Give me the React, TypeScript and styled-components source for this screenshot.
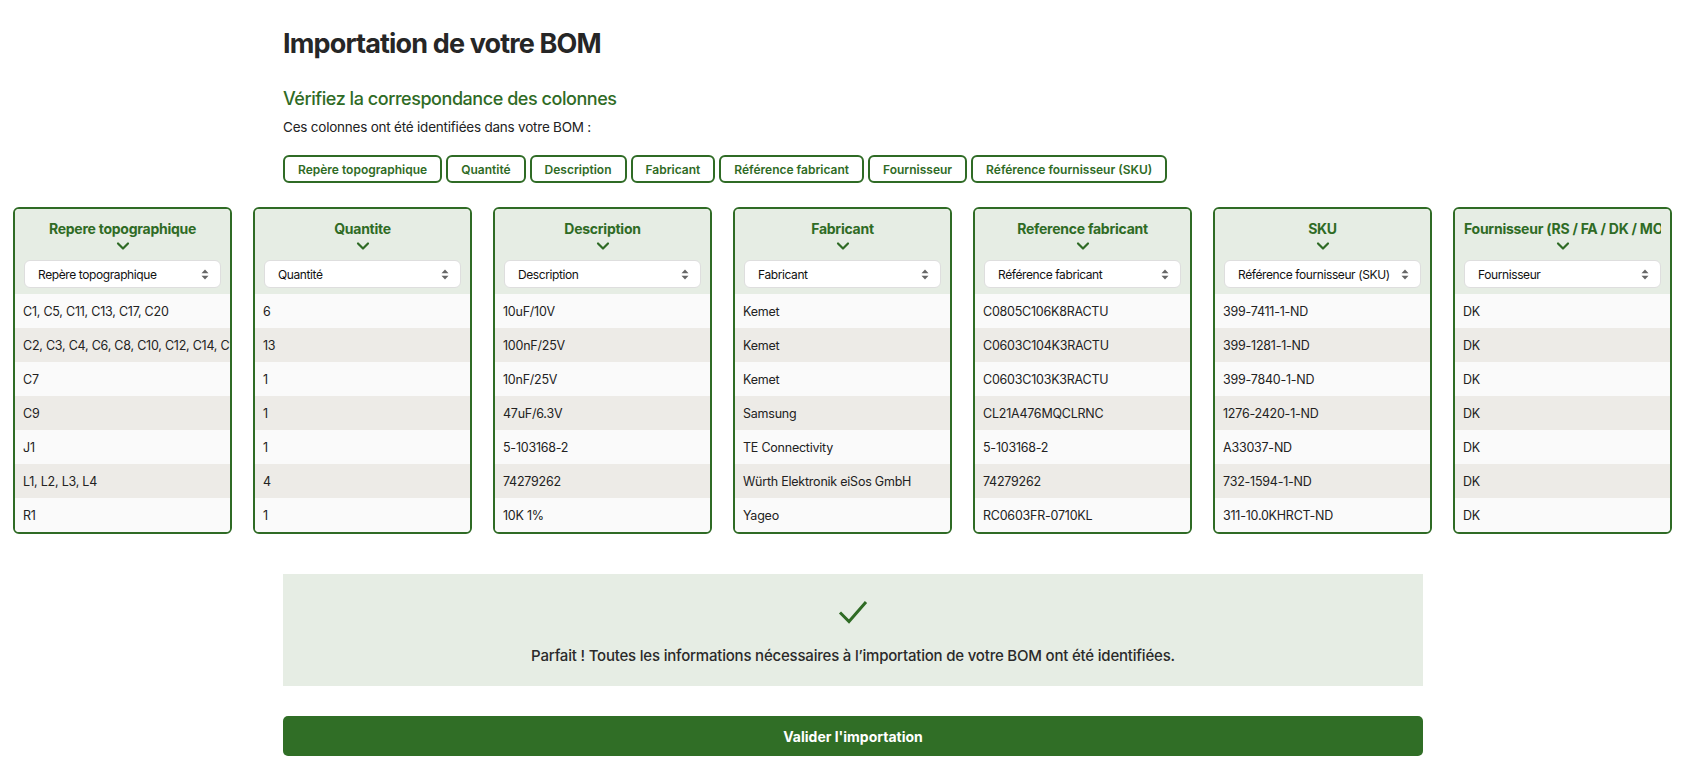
import React from 'react';
import styled, { createGlobalStyle } from 'styled-components';

const GlobalStyle = createGlobalStyle`
  html, body {
    margin: 0;
    padding: 0;
    background: #fff;
  }

  body {
    font-family: Inter, 'Noto Sans', 'Liberation Sans', sans-serif;
    color: #222;
  }

  * {
    box-sizing: border-box;
  }
`;

const GREEN = '#2f6b25';

const Page = styled.main`
  display: flex;
  flex-direction: column;
  padding: 26px 0 16px;
`;

const Narrow = styled.div`
  width: 1140px;
  margin: 0 auto;
  position: relative;
  left: 9px;
`;

const Title = styled.h1`
  margin: 0 0 25px;
  font-size: 27px;
  line-height: 36px;
  font-weight: 700;
  color: #262626;
  letter-spacing: -0.85px;
`;

const SubTitle = styled.h2`
  margin: 0;
  font-size: 18px;
  line-height: 24px;
  font-weight: 500;
  color: ${GREEN};
  letter-spacing: -0.45px;
`;

const Hint = styled.p`
  margin: 6px 0 18px;
  font-size: 13.5px;
  line-height: 20px;
  color: #222;
  letter-spacing: -0.22px;
`;

const Chips = styled.div`
  display: flex;
  flex-wrap: wrap;
  gap: 4px;
`;

const Chip = styled.span`
  display: inline-flex;
  align-items: center;
  height: 28px;
  padding: 0 13px;
  border: 2px solid ${GREEN};
  border-radius: 6px;
  font-size: 12px;
  font-weight: 600;
  color: ${GREEN};
  white-space: nowrap;
`;

const CardsRow = styled.div`
  display: flex;
  gap: 21px;
  padding: 0 0 0 13px;
  margin-top: 24px;
  overflow: hidden;
`;

const Card = styled.section`
  flex: 0 0 219px;
  display: flex;
  flex-direction: column;
  border: 2px solid ${GREEN};
  border-radius: 6px;
  overflow: hidden;
  background: #fafafa;
`;

const CardHead = styled.header`
  display: flex;
  flex-direction: column;
  align-items: center;
  padding: 10px 9px 6px;
  background: #e6ede4;
`;

const ColTitle = styled.div`
  width: 100%;
  font-size: 14px;
  line-height: 20px;
  font-weight: 650;
  color: ${GREEN};
  text-align: center;
  white-space: nowrap;
  overflow: hidden;
  letter-spacing: -0.25px;
`;

const Chevron = styled.svg`
  width: 14px;
  height: 10px;
  margin: 2px 0 9px;
`;

const SelectBox = styled.div`
  position: relative;
  width: 100%;
  height: 28px;
`;

const Select = styled.select`
  width: 100%;
  height: 100%;
  padding: 0 24px 0 13px;
  appearance: none;
  -webkit-appearance: none;
  background: #fff;
  border: 1px solid #dedede;
  border-radius: 6px;
  font-family: inherit;
  font-size: 12px;
  letter-spacing: -0.4px;
  color: #111;
  outline: none;
`;

const SelectArrows = styled.svg`
  position: absolute;
  right: 12px;
  top: 9px;
  width: 8px;
  height: 11px;
  pointer-events: none;
`;

const Cell = styled.div<{ $alt: boolean }>`
  height: 34px;
  padding: 0 8px;
  display: flex;
  align-items: center;
  font-size: 12.5px;
  letter-spacing: -0.23px;
  color: #222;
  white-space: nowrap;
  overflow: hidden;
  background: ${(p) => (p.$alt ? '#edebe7' : '#fafafa')};
`;

const Success = styled.div`
  display: flex;
  flex-direction: column;
  align-items: center;
  height: 112px;
  margin-top: 40px;
  padding-top: 24px;
  background: #e6ede4;
`;

const Check = styled.svg`
  width: 32px;
  height: 28px;
`;

const SuccessText = styled.p`
  margin: 20px 0 0;
  font-size: 15px;
  font-weight: 500;
  letter-spacing: -0.2px;
  color: #2a2a2a;
`;

const ValidateBtn = styled.button`
  display: block;
  width: 100%;
  height: 40px;
  margin-top: 30px;
  border: none;
  border-radius: 5px;
  background: #306e26;
  color: #fff;
  font-family: inherit;
  font-size: 14px;
  font-weight: 700;
  cursor: pointer;
`;

const chips = [
  'Repère topographique',
  'Quantité',
  'Description',
  'Fabricant',
  'Référence fabricant',
  'Fournisseur',
  'Référence fournisseur (SKU)',
];

const columns = [
  {
    title: 'Repere topographique',
    field: 'Repère topographique',
    values: [
      'C1, C5, C11, C13, C17, C20',
      'C2, C3, C4, C6, C8, C10, C12, C14, C15, C16',
      'C7',
      'C9',
      'J1',
      'L1, L2, L3, L4',
      'R1',
    ],
  },
  {
    title: 'Quantite',
    field: 'Quantité',
    values: ['6', '13', '1', '1', '1', '4', '1'],
  },
  {
    title: 'Description',
    field: 'Description',
    values: ['10uF/10V', '100nF/25V', '10nF/25V', '47uF/6.3V', '5-103168-2', '74279262', '10K 1%'],
  },
  {
    title: 'Fabricant',
    field: 'Fabricant',
    values: ['Kemet', 'Kemet', 'Kemet', 'Samsung', 'TE Connectivity', 'Würth Elektronik eiSos GmbH', 'Yageo'],
  },
  {
    title: 'Reference fabricant',
    field: 'Référence fabricant',
    values: [
      'C0805C106K8RACTU',
      'C0603C104K3RACTU',
      'C0603C103K3RACTU',
      'CL21A476MQCLRNC',
      '5-103168-2',
      '74279262',
      'RC0603FR-0710KL',
    ],
  },
  {
    title: 'SKU',
    field: 'Référence fournisseur (SKU)',
    values: [
      '399-7411-1-ND',
      '399-1281-1-ND',
      '399-7840-1-ND',
      '1276-2420-1-ND',
      'A33037-ND',
      '732-1594-1-ND',
      '311-10.0KHRCT-ND',
    ],
  },
  {
    title: 'Fournisseur (RS / FA / DK / MOUSER)',
    field: 'Fournisseur',
    values: ['DK', 'DK', 'DK', 'DK', 'DK', 'DK', 'DK'],
  },
];

function ColumnCard({ title, field, values }: { title: string; field: string; values: string[] }) {
  return (
    <Card>
      <CardHead>
        <ColTitle>{title}</ColTitle>
        <Chevron viewBox="0 0 14 10">
          <path d="M2 2.5 L7 7.5 L12 2.5" fill="none" stroke={GREEN} strokeWidth="2.2" strokeLinecap="round" strokeLinejoin="round" />
        </Chevron>
        <SelectBox>
          <Select defaultValue={field}>
            {chips.map((c) => (
              <option key={c} value={c}>
                {c}
              </option>
            ))}
          </Select>
          <SelectArrows viewBox="0 0 8 11">
            <path d="M4 0.5 L7.5 4.2 H0.5 Z M4 10.5 L7.5 6.8 H0.5 Z" fill="#666" />
          </SelectArrows>
        </SelectBox>
      </CardHead>
      {values.map((v, i) => (
        <Cell key={i} $alt={i % 2 === 1}>
          {v}
        </Cell>
      ))}
    </Card>
  );
}

export default function App() {
  return (
    <>
      <GlobalStyle />
      <Page>
        <Narrow>
          <Title>Importation de votre BOM</Title>
          <SubTitle>Vérifiez la correspondance des colonnes</SubTitle>
          <Hint>Ces colonnes ont été identifiées dans votre BOM :</Hint>
          <Chips>
            {chips.map((c) => (
              <Chip key={c}>{c}</Chip>
            ))}
          </Chips>
        </Narrow>

        <CardsRow>
          {columns.map((col) => (
            <ColumnCard key={col.title} {...col} />
          ))}
        </CardsRow>

        <Narrow>
          <Success>
            <Check viewBox="0 0 32 28">
              <path d="M3 14.5 L12 23.5 L29 4" fill="none" stroke={GREEN} strokeWidth="3" />
            </Check>
            <SuccessText>
              Parfait ! Toutes les informations nécessaires à l’importation de votre BOM ont été identifiées.
            </SuccessText>
          </Success>
          <ValidateBtn type="button">Valider l'importation</ValidateBtn>
        </Narrow>
      </Page>
    </>
  );
}
